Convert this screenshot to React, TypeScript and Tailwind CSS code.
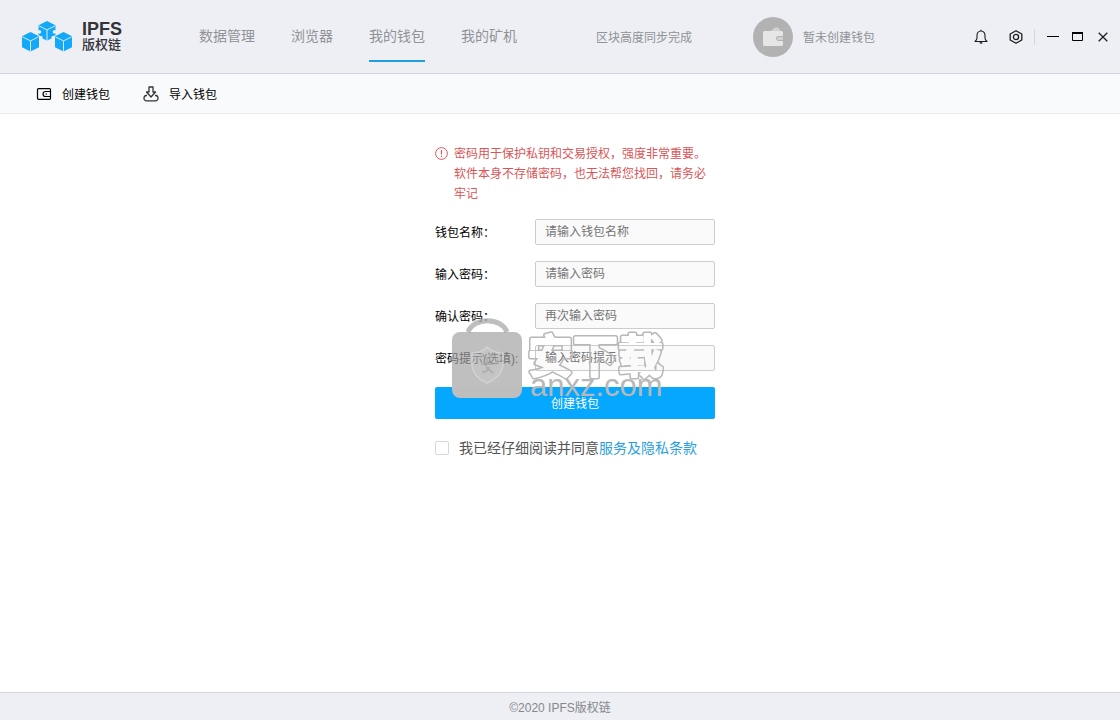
import { useState } from "react";

const tabs = ["数据管理", "浏览器", "我的钱包", "我的矿机"];

const fields = [
  { name: "walletName", label: "钱包名称：", placeholder: "请输入钱包名称", type: "text" },
  { name: "password", label: "输入密码：", placeholder: "请输入密码", type: "password" },
  { name: "confirm", label: "确认密码：", placeholder: "再次输入密码", type: "password" },
  { name: "hint", label: "密码提示(选填):", placeholder: "输入密码提示", type: "text" },
];

function Cube({ x, y }: { x: number; y: number }) {
  return (
    <g transform={`translate(${x} ${y})`}>
      <path d="M8.5 0 17 4.200V15.300L8.500 19.600 0 15.300V4.200Z" />
      <path d="M0.300 4.800 8.500 8.900 16.700 4.800M8.500 8.900V19.600" fill="none" stroke="#d3ebfa" />
    </g>
  );
}

function Logo() {
  return (
    <div className="flex shrink-0 items-center gap-2.5">
      <svg width="50" height="31" viewBox="0 0 50 31" fill="#14a9f8" aria-hidden="true">
        <path d="M25 0 33.500 4.200V9.500A1.700 1.700 0 1 0 33.500 12.200V14.200L29.500 15.500V17.500L25 19.600 20.500 17.500V15.500L16.500 14.200V12.200A1.700 1.700 0 1 0 16.500 9.500V4.200Z" />
        <path d="M16.800 4.800 25 8.900 33.200 4.800M25 8.900V19.600" fill="none" stroke="#d3ebfa" />
        <Cube x={0} y={11} />
        <Cube x={33} y={11} />
      </svg>
      <div className="text-[#333338]">
        <div className="text-lg leading-4 font-bold">IPFS</div>
        <div className="text-[13px] leading-4 font-medium">版权链</div>
      </div>
    </div>
  );
}

function Watermark() {
  return (
    <svg
      className="pointer-events-none absolute top-[174px] left-[17px]"
      width="216"
      height="84"
      viewBox="0 0 216 84"
      aria-hidden="true"
    >
      <defs>
        <mask id="outline" maskUnits="userSpaceOnUse" x="70" y="0" width="146" height="84">
          <rect x="70" width="146" height="84" fill="#fff" />
          <text
            x="76"
            y="55"
            className="font-['Noto_Sans_CJK_SC',sans-serif] text-[45px] font-bold"
            fill="#000"
            stroke="#000"
            strokeWidth="2"
            strokeLinejoin="round"
          >
            安下载
          </text>
        </mask>
      </defs>

      <path d="M16 14C22 -1 49 -1 55 14" fill="none" stroke="#a8a8a8" strokeWidth="5" opacity="0.75" />
      <path d="M8 14H62A8 8 0 0 1 70 22V69H0V22A8 8 0 0 1 8 14Z" fill="#a0a0a0" opacity="0.68" />
      <path d="M0 69H70V72A8 8 0 0 1 62 80H8A8 8 0 0 1 0 72Z" fill="#bebebe" />
      <path
        d="M35 29C40 34 46 35 51 35V46C51 55 43 62 35 65 27 62 20 55 20 46V35C26 35 31 34 35 29Z"
        fill="#ddd"
        fillOpacity="0.2"
        stroke="#d8d8d8"
        strokeOpacity="0.7"
        strokeWidth="1.500"
      />
      <path
        d="M30 36 35 41 41 36M35 41V46M29 46H42M30 54C35 54 37 51 37 49M34 49 41 55"
        fill="none"
        stroke="#999"
        strokeWidth="2"
        opacity="0.5"
      />

      <text
        x="76"
        y="55"
        className="font-['Noto_Sans_CJK_SC',sans-serif] text-[45px] font-bold"
        fill="#b8b8b8"
        stroke="#b8b8b8"
        strokeWidth="5"
        strokeLinejoin="round"
        mask="url(#outline)"
      >
        安下载
      </text>
      <text
        x="78"
        y="78"
        className="font-['Liberation_Sans',sans-serif] text-[31px]"
        fill="#b8b8b8"
      >
        anxz.com
      </text>
    </svg>
  );
}

export default function App() {
  const [active, setActive] = useState("我的钱包");
  const [agreed, setAgreed] = useState(false);

  return (
    <div className="flex min-h-screen flex-col bg-white font-['Liberation_Sans','Noto_Sans_CJK_SC',sans-serif] text-xs text-black">
      <header className="flex h-[74px] shrink-0 items-center border-b border-[#d3d5de] bg-[#edeff5] pr-3 pl-[22px] whitespace-nowrap text-[#909296]">
        <Logo />
        <nav className="ml-[77px] flex gap-9 self-stretch">
          {tabs.map((tab) => (
            <button
              key={tab}
              type="button"
              onClick={() => setActive(tab)}
              className={
                tab === active
                  ? "h-[62px] border-b-2 border-[#219fdc] pt-3 text-sm"
                  : "h-[62px] border-b-2 border-transparent pt-3 text-sm"
              }
            >
              {tab}
            </button>
          ))}
        </nav>
        <span className="ml-[79px] pt-0.5">区块高度同步完成</span>
        <div className="ml-[61px] flex items-center gap-2.5">
          <span className="flex size-10 items-center justify-center rounded-full bg-[#b2b2b2]">
            <svg width="20" height="20" viewBox="0 0 20 20" aria-hidden="true">
              <path d="M8 4C10 2 11 1 13 0.300 15 -0.300 16 1 17 3V4Z" fill="#d2d2d2" />
              <path
                d="M1.500 4H18.500A1.500 1.500 0 0 1 20 5.500V9H15.500A2.500 2.500 0 0 0 15.500 14H20V17.500A1.500 1.500 0 0 1 18.500 19H1.500A1.500 1.500 0 0 1 0 17.500V5.500A1.500 1.500 0 0 1 1.500 4Z"
                fill="#e6e6e6"
              />
              <path d="M15.500 10H20V13H15.500A1.500 1.500 0 0 1 15.500 10Z" fill="#d2d2d2" />
            </svg>
          </span>
          <span className="pt-0.5">暂未创建钱包</span>
        </div>
        <div className="ml-auto flex items-center text-[#1d1d1f]">
          <button type="button" aria-label="通知">
            <svg width="14" height="16" viewBox="0 0 14 16" fill="none" stroke="currentColor" strokeWidth="1.100">
              <path
                d="M7 2C4.300 2 3 4 3 6.500V9C3 10.500 2.200 11.500 1 12.500H13C11.800 11.500 11 10.500 11 9V6.500C11 4 9.700 2 7 2ZM7 2V0.800"
                strokeLinejoin="round"
              />
              <path d="M5.800 13.500A1.300 1 0 0 0 8.200 13.500" fill="currentColor" />
            </svg>
          </button>
          <button type="button" aria-label="设置" className="ml-[21px]">
            <svg width="14" height="14" viewBox="0 0 14 14" fill="none" stroke="currentColor" strokeWidth="1.300">
              <path d="M7 0.800 12.800 4V10L7 13.200 1.200 10V4Z" strokeLinejoin="round" />
              <circle cx="7" cy="7" r="2.600" />
            </svg>
          </button>
          <span className="ml-[11px] h-4 w-px bg-[#d5d6da]" />
          <button type="button" aria-label="最小化" className="ml-3">
            <svg width="12" height="12" viewBox="0 0 12 12">
              <path d="M0 5.500H12" stroke="#000" />
            </svg>
          </button>
          <button type="button" aria-label="最大化" className="ml-[13px]">
            <svg width="11" height="10" viewBox="0 0 11 10" fill="none" stroke="#000">
              <path d="M0.500 1V8.500H10.500V1" />
              <path d="M0 1H11" strokeWidth="2" />
            </svg>
          </button>
          <button type="button" aria-label="关闭" className="ml-[15px]">
            <svg width="10" height="10" viewBox="0 0 10 10" stroke="currentColor" strokeWidth="1.300">
              <path d="M0.700 0.700 9.300 9.300M9.300 0.700 0.700 9.300" />
            </svg>
          </button>
        </div>
      </header>

      <div className="flex h-10 shrink-0 items-center gap-[33px] border-b border-[#e9ebef] bg-[#f9fafc] px-9">
        <button type="button" className="flex items-center gap-2.5">
          <svg width="16" height="12" viewBox="0 0 16 12" fill="none" stroke="currentColor" strokeWidth="1.200">
            <rect x="1.500" y="0.700" width="13" height="10.600" rx="1" />
            <path d="M14.500 3.500H9.500A2.500 2.500 0 0 0 9.500 8.500H14.500" />
            <path d="M9.500 6H11" />
          </svg>
          <span className="pt-0.5">创建钱包</span>
        </button>
        <button type="button" className="flex items-center gap-2.5">
          <svg width="16" height="16" viewBox="0 0 16 16" fill="none" stroke="#333" strokeWidth="1.300">
            <path d="M6 1H10V6H12.500L8 11 3.500 6H6Z" strokeLinejoin="round" />
            <path d="M4 9.500H2.800A2.300 2.700 0 0 0 2.800 14.800H13.200A2.300 2.700 0 0 0 13.200 9.500H12" />
          </svg>
          <span className="pt-0.5">导入钱包</span>
        </button>
      </div>

      <main className="flex-1 pt-[30px]">
        <form
          className="relative mx-auto w-[310px] pl-[30px]"
          onSubmit={(e) => e.preventDefault()}
        >
          <div className="relative">
            <div className="flex gap-1.5 leading-5 text-[#d95557]">
              <svg className="mt-[3px] shrink-0" width="13" height="13" viewBox="0 0 13 13" fill="none" stroke="currentColor">
                <circle cx="6.500" cy="6.500" r="5.900" />
                <path d="M6.500 3V7.500M6.500 8.700V10" strokeWidth="1.200" />
              </svg>
              <p>密码用于保护私钥和交易授权，强度非常重要。软件本身不存储密码，也无法帮您找回，请务必牢记</p>
            </div>

            <div className="mt-[15px] flex flex-col gap-4">
              {fields.map((f) => (
                <div key={f.name} className="flex h-[26px] items-center">
                  <label htmlFor={f.name} className="w-[100px] shrink-0 pt-0.5 whitespace-nowrap">
                    {f.label}
                  </label>
                  <input
                    id={f.name}
                    name={f.name}
                    type={f.type}
                    placeholder={f.placeholder}
                    className="h-full w-full min-w-0 rounded-xs border border-[#ccc] bg-[#fafafa] px-[9px] placeholder:text-[#757575]"
                  />
                </div>
              ))}
            </div>

            <button type="submit" className="mt-4 h-8 w-full rounded-xs bg-[#06a7ff] pt-0.5 text-white">
              创建钱包
            </button>

            <div className="mt-[19px] flex items-center text-sm text-[#555]">
              <input
                id="agree"
                type="checkbox"
                checked={agreed}
                onChange={(e) => setAgreed(e.target.checked)}
                className="mr-2.5 size-3.5 appearance-none rounded-xs border border-[#d9d9d9] bg-white checked:bg-[#06a7ff]"
              />
              <label htmlFor="agree">我已经仔细阅读并同意</label>
              <a href="#terms" className="text-[#2a9fe0]">服务及隐私条款</a>
            </div>

            <Watermark />
          </div>
        </form>
      </main>

      <footer className="flex h-7 shrink-0 items-center justify-center border-t border-[#d3d5de] bg-[#edeff5] pt-0.5 text-[#85878c]">
        ©2020 IPFS版权链
      </footer>
    </div>
  );
}
